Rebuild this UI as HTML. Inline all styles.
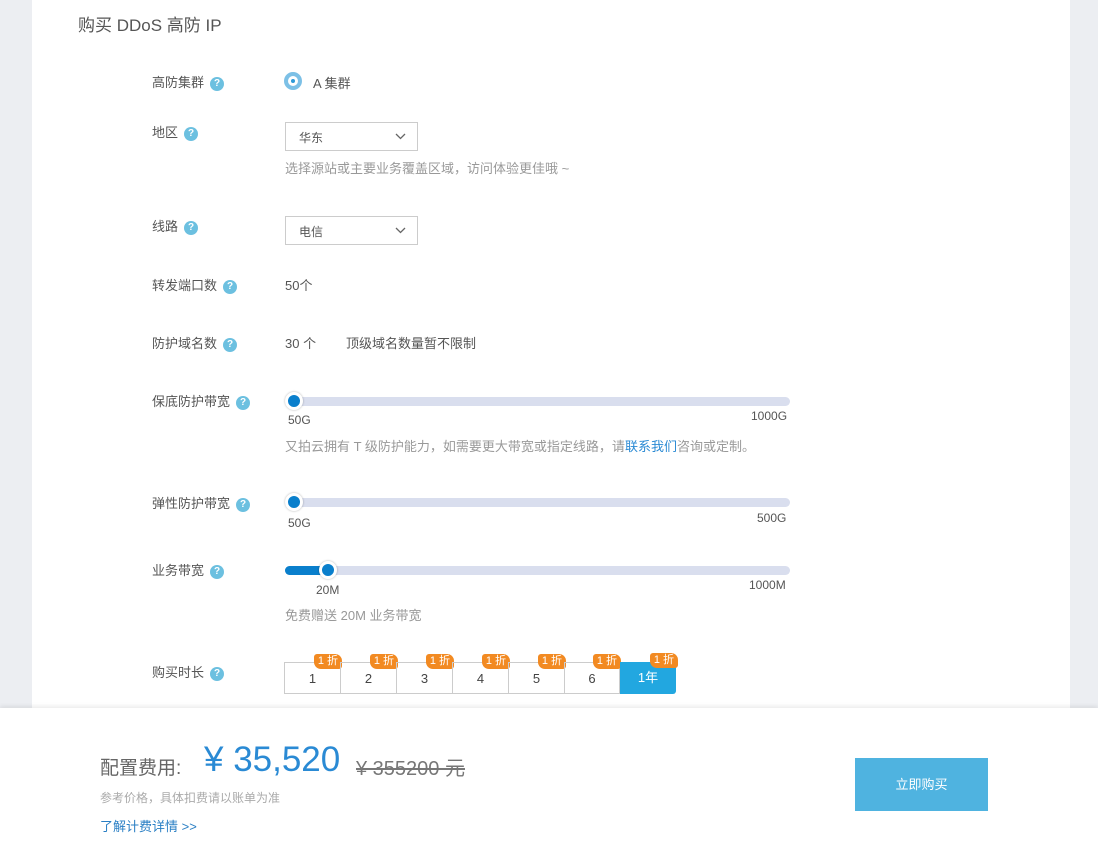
<!DOCTYPE html>
<html><head><meta charset="utf-8"><style>
*{margin:0;padding:0;box-sizing:border-box}
body{width:1098px;height:860px;background:#eceef2;font-family:"Liberation Sans","Noto Sans CJK SC",sans-serif;position:relative;overflow:hidden;color:#555}
.main{position:absolute;left:32px;top:0;width:1038px;height:720px;background:#fff}
.a{position:absolute;white-space:nowrap}
.lbl{font-size:13px;color:#555}
.q{display:inline-block;width:14px;height:14px;border-radius:50%;background:#6cc0e0;color:#fff;font-size:10px;line-height:14px;text-align:center;font-weight:bold;margin-left:6px;vertical-align:1px}
.sel{position:absolute;width:133px;height:29px;border:1px solid #ccc;font-size:12px;color:#555;padding:6px 13px}
.sel svg{position:absolute;right:11px;top:10px}
.track{position:absolute;height:9px;border-radius:5px;background:#d9deee;left:285px;width:505px}
.knob{position:absolute;width:18px;height:18px;border-radius:50%;background:#0a7fcc;border:3px solid #fff;box-shadow:0 0 2px rgba(0,0,0,.3)}
.s{font-size:12px;color:#555}
.tip{font-size:13px;color:#999}
.tab{position:absolute;top:662px;width:56px;height:32px;border:1px solid #ccc;border-right:none;font-size:13px;color:#444;text-align:center;line-height:32px}
.bd{position:absolute;top:-9px;right:-2px;background:#f28a22;color:#fff;font-size:11px;line-height:15px;padding:0 4px;border-radius:3px 7px 3px 7px}
.foot{position:absolute;left:0;top:708px;width:1098px;height:152px;background:#fff;box-shadow:0 -2px 4px rgba(0,0,0,.08)}
</style></head><body>
<div class="main"></div>
<div class="a" style="left:78px;top:11px;font-size:17px;color:#555">购买 DDoS 高防 IP</div>

<div class="a lbl" style="left:152px;top:72px">高防集群<span class="q">?</span></div>
<div class="a" style="left:284px;top:72px;width:18px;height:18px;border-radius:50%;border:4px solid #7cc0e6;background:#fff"><div style="position:absolute;left:3px;top:3px;width:4px;height:4px;border-radius:50%;background:#2e9ad8"></div></div>
<div class="a lbl" style="left:313px;top:73px">A 集群</div>

<div class="a lbl" style="left:152px;top:122px">地区<span class="q">?</span></div>
<div class="sel" style="left:285px;top:122px">华东<svg width="11" height="7"><path d="M1 1l4.5 4.5L10 1" stroke="#666" fill="none" stroke-width="1.3"/></svg></div>
<div class="a tip" style="left:285px;top:158px">选择源站或主要业务覆盖区域，访问体验更佳哦 ~</div>

<div class="a lbl" style="left:152px;top:216px">线路<span class="q">?</span></div>
<div class="sel" style="left:285px;top:216px">电信<svg width="11" height="7"><path d="M1 1l4.5 4.5L10 1" stroke="#666" fill="none" stroke-width="1.3"/></svg></div>

<div class="a lbl" style="left:152px;top:275px">转发端口数<span class="q">?</span></div>
<div class="a lbl" style="left:285px;top:275px">50个</div>

<div class="a lbl" style="left:152px;top:333px">防护域名数<span class="q">?</span></div>
<div class="a lbl" style="left:285px;top:333px">30 个</div>
<div class="a lbl" style="left:346px;top:333px">顶级域名数量暂不限制</div>

<div class="a lbl" style="left:152px;top:391px">保底防护带宽<span class="q">?</span></div>
<div class="track" style="top:397px"></div>
<div class="knob" style="left:285px;top:392px"></div>
<div class="a s" style="left:288px;top:413px">50G</div>
<div class="a s" style="left:751px;top:409px">1000G</div>
<div class="a tip" style="left:285px;top:436px">又拍云拥有 T 级防护能力，如需要更大带宽或指定线路，请<span style="color:#2a8ad4">联系我们</span>咨询或定制。</div>

<div class="a lbl" style="left:152px;top:493px">弹性防护带宽<span class="q">?</span></div>
<div class="track" style="top:498px"></div>
<div class="knob" style="left:285px;top:493px"></div>
<div class="a s" style="left:288px;top:516px">50G</div>
<div class="a s" style="left:757px;top:511px">500G</div>

<div class="a lbl" style="left:152px;top:560px">业务带宽<span class="q">?</span></div>
<div class="track" style="top:566px"></div>
<div class="a" style="left:285px;top:566px;width:45px;height:9px;border-radius:5px;background:#0a7fcc"></div>
<div class="knob" style="left:319px;top:561px"></div>
<div class="a s" style="left:316px;top:583px">20M</div>
<div class="a s" style="left:749px;top:578px">1000M</div>
<div class="a tip" style="left:285px;top:605px">免费赠送 20M 业务带宽</div>

<div class="a lbl" style="left:152px;top:662px">购买时长<span class="q">?</span></div>
<div class="tab" style="left:284px">1<span class="bd">1 折</span></div>
<div class="tab" style="left:340px">2<span class="bd">1 折</span></div>
<div class="tab" style="left:396px">3<span class="bd">1 折</span></div>
<div class="tab" style="left:452px">4<span class="bd">1 折</span></div>
<div class="tab" style="left:508px">5<span class="bd">1 折</span></div>
<div class="tab" style="left:564px;border-right:1px solid #ccc">6<span class="bd">1 折</span></div>
<div class="tab" style="left:620px;border:none;background:#22a7e0;color:#fff;border-radius:0 0 3px 0">1年<span class="bd">1 折</span></div>

<div class="foot"></div>
<div class="a" style="left:100px;top:753px;font-size:19px;color:#666">配置费用:</div>
<div class="a" style="left:204px;top:740px;font-size:35px;color:#2a8ad4">¥&nbsp;35,520</div>
<div class="a" style="left:356px;top:752px;font-size:20px;color:#777;text-decoration:line-through">¥&nbsp;355200 元</div>
<div class="a" style="left:100px;top:789px;font-size:12px;color:#aaa">参考价格，具体扣费请以账单为准</div>
<div class="a" style="left:100px;top:816px;font-size:13px;color:#2a7fc4">了解计费详情 &gt;&gt;</div>
<div class="a" style="left:855px;top:758px;width:133px;height:53px;background:#4fb3e0;color:#fff;font-size:13px;text-align:center;line-height:53px">立即购买</div>
</body></html>
